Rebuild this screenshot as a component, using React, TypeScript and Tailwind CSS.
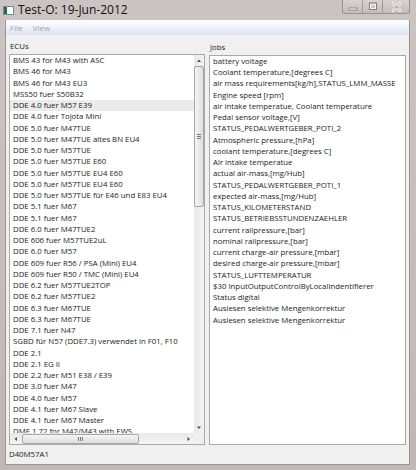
import React from "react";

const ecus = [
  "BMS 43 for M43 with ASC",
  "BMS 46 for M43",
  "BMS 46 for M43 EU3",
  "MSS50 fuer S50B32",
  "DDE 4.0 fuer M57 E39",
  "DDE 4.0 fuer Tojota Mini",
  "DDE 5.0 fuer M47TUE",
  "DDE 5.0 fuer M47TUE altes BN EU4",
  "DDE 5.0 fuer M57TUE",
  "DDE 5.0 fuer M57TUE E60",
  "DDE 5.0 fuer M57TUE EU4 E60",
  "DDE 5.0 fuer M57TUE EU4 E60",
  "DDE 5.0 fuer M57TUE für E46 und E83 EU4",
  "DDE 5.1 fuer M67",
  "DDE 5.1 fuer M67",
  "DDE 6.0 fuer M47TUE2",
  "DDE 606 fuer M57TUE2uL",
  "DDE 6.0 fuer M57",
  "DDE 609 fuer R56 / PSA (Mini) EU4",
  "DDE 609 fuer R50 / TMC (Mini) EU4",
  "DDE 6.2 fuer M57TUE2TOP",
  "DDE 6.2 fuer M57TUE2",
  "DDE 6.3 fuer M67TUE",
  "DDE 6.3 fuer M67TUE",
  "DDE 7.1 fuer N47",
  "SGBD für N57 (DDE7.3) verwendet in F01, F10",
  "DDE 2.1",
  "DDE 2.1 EG II",
  "DDE 2.2 fuer M51 E38 / E39",
  "DDE 3.0 fuer M47",
  "DDE 4.0 fuer M57",
  "DDE 4.1 fuer M67 Slave",
  "DDE 4.1 fuer M67 Master",
  "DME 1.72 for M42/M43 with EWS",
];

const jobs = [
  "battery voltage",
  "Coolant temperature,[degrees C]",
  "air mass requirements[kg/h],STATUS_LMM_MASSE",
  "Engine speed [rpm]",
  "air intake temperatue, Coolant temperature",
  "Pedal sensor voltage,[V]",
  "STATUS_PEDALWERTGEBER_POTI_2",
  "Atmospheric pressure,[hPa]",
  "coolant temperature,[degrees C]",
  "Air intake temperatue",
  "actual air-mass,[mg/Hub]",
  "STATUS_PEDALWERTGEBER_POTI_1",
  "expected air-mass,[mg/Hub]",
  "STATUS_KILOMETERSTAND",
  "STATUS_BETRIEBSSTUNDENZAEHLER",
  "current railpressure,[bar]",
  "nominal railpressure,[bar]",
  "current charge-air pressure,[mbar]",
  "desired charge-air pressure,[mbar]",
  "STATUS_LUFTTEMPERATUR",
  "$30 InputOutputControlByLocalIndentifierer",
  "Status digital",
  "Auslesen selektive Mengenkorrektur",
  "Auslesen selektive Mengenkorrektur",
];

function Row({ text, selected }: { text: string; selected?: boolean }) {
  return (
    <div
      className={
        "h-[11.25px] shrink-0 whitespace-nowrap pl-[3px] text-[7.8px] leading-[11.25px] text-[#1b1b1b] " +
        (selected ? "bg-[#ebebeb]" : "")
      }
    >
      {text}
    </div>
  );
}

function ScrollArrow({ dir }: { dir: "up" | "down" | "left" | "right" }) {
  const pts = {
    up: "1,4 3,1.5 5,4",
    down: "1,1.5 3,4 5,1.5",
    left: "4,1 1.5,3 4,5",
    right: "1.5,1 4,3 1.5,5",
  }[dir];
  return (
    <svg width="6" height="6" viewBox="0 0 6 6">
      <polygon points={pts} fill="#4a4a4a" />
    </svg>
  );
}

function TitleBar() {
  return (
    <div className="flex h-[20px] shrink-0 items-start">
      <div className="ml-[3px] mt-[6px] flex h-[9px] w-[11px] border border-[#7b8a8a] bg-white">
        <div className="w-[3px] bg-[#1f6b62]" />
      </div>
      <span className="ml-[4px] mt-[2px] text-[12px] leading-[16px] text-[#111]">Test-O: 19-Jun-2012</span>
      <div className="ml-auto mr-[6px] flex h-[14px] w-[68px] items-center rounded-b-[3px] border border-t-0 border-[#9a9290] bg-gradient-to-b from-[#d8d2d1] to-[#c3bcbb]">
        <div className="flex w-[19px] justify-center">
          <svg width="10" height="8" viewBox="0 0 10 8">
            <rect x="1" y="5" width="8" height="2" fill="#fff" stroke="#7d7674" strokeWidth="0.8" />
          </svg>
        </div>
        <div className="h-full w-px bg-[#a39b99]" />
        <div className="flex w-[19px] justify-center">
          <svg width="10" height="9" viewBox="0 0 10 9">
            <rect x="1.5" y="1" width="7" height="6.5" fill="none" stroke="#7d7674" strokeWidth="0.9" />
            <rect x="2.5" y="2.5" width="5" height="4" fill="none" stroke="#fff" strokeWidth="0.8" />
          </svg>
        </div>
        <div className="h-full w-px bg-[#a39b99]" />
        <div className="flex flex-1 justify-center">
          <svg width="11" height="10" viewBox="0 0 11 10">
            <path d="M2 1.5 L9 8.5 M9 1.5 L2 8.5" stroke="#fff" strokeWidth="2.6" strokeLinecap="round" />
            <path d="M2 1.5 L9 8.5 M9 1.5 L2 8.5" stroke="#8a8381" strokeWidth="1" strokeLinecap="round" />
          </svg>
        </div>
      </div>
    </div>
  );
}

export default function App() {
  return (
    <div className="flex h-[470px] w-[416px] flex-col bg-gradient-to-b from-[#cbc4c3] to-[#c0b8b7] font-['Open_Sans',sans-serif]">
      <TitleBar />
      <div className="ml-[5px] mr-[6px] mb-[5px] flex min-h-0 flex-1 flex-col border-l border-r border-b border-[#9d9593] bg-[#f0f0f0]">
        {/* menu */}
        <div className="flex h-[15px] shrink-0 items-center gap-[10px] bg-gradient-to-b from-[#ffffff] to-[#dbe4f4] pl-[4px] text-[8px] text-[#a4a4a4]">
          <span>File</span>
          <span>View</span>
        </div>

        <div className="flex min-h-0 flex-1 gap-[4px] px-[3px]">
          {/* ECUs */}
          <div className="flex w-[196px] flex-col">
            <div className="flex h-[20px] items-end pb-[3px] pl-[1px] text-[7.8px] leading-[10px] text-[#1b1b1b]">ECUs</div>
            <div className="flex h-[391px] flex-col border border-[#a9a9a9] bg-white">
              <div className="flex min-h-0 flex-1">
                <div className="flex min-w-0 flex-1 flex-col overflow-hidden">
                  {ecus.map((e, i) => (
                    <Row key={i} text={e} selected={i === 4} />
                  ))}
                </div>
                <div className="flex w-[10px] flex-col bg-gradient-to-r from-[#e8e8e8] to-[#f4f4f4]">
                  <div className="flex h-[11px] items-center justify-center">
                    <ScrollArrow dir="up" />
                  </div>
                  <div className="flex h-[141px] items-center justify-center rounded-[2px] border border-[#a7a7a7] bg-gradient-to-r from-[#f5f5f5] to-[#dedede]">
                    <div className="flex flex-col gap-[1px]">
                      <div className="h-px w-[4px] bg-[#777]" />
                      <div className="h-px w-[4px] bg-[#777]" />
                      <div className="h-px w-[4px] bg-[#777]" />
                    </div>
                  </div>
                  <div className="flex-1" />
                  <div className="flex h-[11px] items-center justify-center">
                    <ScrollArrow dir="down" />
                  </div>
                </div>
              </div>
              <div className="flex h-[11px] shrink-0">
                <div className="flex flex-1 items-center bg-gradient-to-b from-[#e8e8e8] to-[#f4f4f4]">
                  <div className="flex w-[12px] justify-center">
                    <ScrollArrow dir="left" />
                  </div>
                  <div className="flex h-[10px] w-[117px] items-center justify-center rounded-[2px] border border-[#a7a7a7] bg-gradient-to-b from-[#f5f5f5] to-[#dedede]">
                    <div className="flex gap-[1px]">
                      <div className="h-[4px] w-px bg-[#777]" />
                      <div className="h-[4px] w-px bg-[#777]" />
                      <div className="h-[4px] w-px bg-[#777]" />
                    </div>
                  </div>
                  <div className="flex-1" />
                  <div className="flex w-[11px] justify-center">
                    <ScrollArrow dir="right" />
                  </div>
                </div>
                <div className="w-[10px] bg-[#f0f0f0]" />
              </div>
            </div>
          </div>

          {/* Jobs */}
          <div className="flex w-[197px] flex-col">
            <div className="flex h-[20px] items-end pb-[3px] pl-[1px] text-[7.8px] leading-[10px] text-[#1b1b1b]">Jobs</div>
            <div className="flex h-[391px] flex-col overflow-hidden border border-[#a9a9a9] bg-white">
              {jobs.map((j, i) => (
                <Row key={i} text={j} />
              ))}
            </div>
          </div>
        </div>

        {/* status */}
        <div className="flex h-[19px] shrink-0 items-center pl-[3px] text-[7.8px] text-[#1b1b1b]">D40M57A1</div>
      </div>
    </div>
  );
}
